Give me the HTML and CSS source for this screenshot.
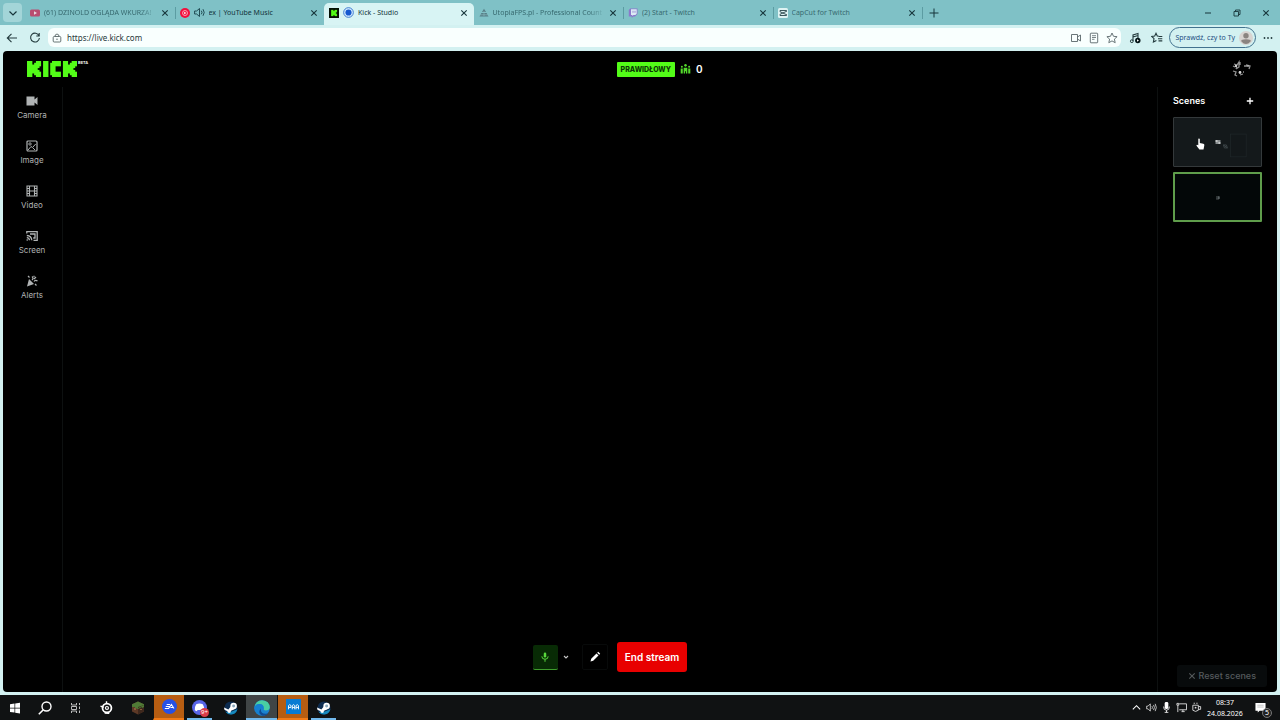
FILE: index.html
```html
<!DOCTYPE html>
<html lang="pl">
<head>
<meta charset="utf-8">
<meta name="viewport" content="width=device-width, initial-scale=1">
<title>Kick - Studio</title>
<link rel="stylesheet" href="styles.css">
</head>
<body>
<svg class="defs" aria-hidden="true">
  <symbol id="x" viewBox="0 0 8 8"><path d="M1.3 1.3l5.4 5.4M6.7 1.3L1.3 6.7" fill="none" stroke="currentColor" stroke-width="1.1"/></symbol>
  <symbol id="plus" viewBox="0 0 10 10"><path d="M5 .5v9M.5 5h9" fill="none" stroke="currentColor"/></symbol>
  <symbol id="steam" viewBox="0 0 16 16">
    <circle cx="8" cy="8" r="7.500" fill="#0d2c50"/><path d="M2 12.500A7.500 7.500 0 0 0 15.300 9.500L9 12z" fill="#1689bd"/>
    <path d="M0 7.500l5 2.200L8 6l4 3.500-4 1.500q0 3-3 2.500L3.500 11.500.5 10z" fill="#fff"/>
    <circle cx="11" cy="5.600" r="3.700" fill="#fff"/><circle cx="11" cy="5.600" r="1.700" fill="#8ba8bd"/>
  </symbol>
  <symbol id="kick-k" viewBox="0 0 8 9"><g fill="currentColor"><rect width="3" height="9"/><rect x="2" y="2" width="4" height="5"/><rect x="4" y="1" width="3" height="3"/><rect x="4" y="5" width="3" height="3"/><rect x="5" width="3" height="3"/><rect x="5" y="6" width="3" height="3"/></g></symbol>
</svg>

<header class="browser">
  <div class="tabstrip">
    <button class="tab-menu" aria-label="Menu kart"><svg viewBox="0 0 10 10" width="10" height="10"><path d="M1.500 3.500L5 7l3.500-3.500" fill="none" stroke="#17353b" stroke-width="1.200"/></svg></button>
    <nav class="tabs">
      <div class="tab">
        <svg class="fav" viewBox="0 0 10 10"><rect y="1.500" width="10" height="7" rx="1.500" fill="#b94d70"/><path d="M4 3.300v3.400L7 5z" fill="#e8dce3"/></svg>
        <span class="tab-title fade">(61) DZINOLD OGLĄDA WKURZA!</span>
        <button class="close" aria-label="Zamknij"><svg><use href="#x"/></svg></button>
      </div>
      <div class="tab sep strong">
        <svg class="fav" viewBox="0 0 10 10"><circle cx="5" cy="5" r="5" fill="#f20f3c"/><circle cx="5" cy="5" r="2.500" fill="none" stroke="#ffd5dc" stroke-width=".7"/><path d="M4.200 3.700v2.600L6.400 5z" fill="#fff"/></svg>
        <svg class="audio" viewBox="0 0 11 10"><path d="M.6 3.500h2L5.500 1v8L2.600 6.500h-2zM7.300 3.200q1.400 1.800 0 3.600M9 1.700q2.400 3.300 0 6.600" fill="none" stroke="#164047" stroke-width=".9"/></svg>
        <span class="tab-title">ex | YouTube Music</span>
        <button class="close" aria-label="Zamknij"><svg><use href="#x"/></svg></button>
      </div>
      <div class="tab active">
        <svg class="fav" viewBox="0 0 10 10"><rect width="10" height="10" fill="#061005"/><svg x="2" y="1.500" width="6.500" height="7" color="#53fc18"><use href="#kick-k"/></svg></svg>
        <svg class="audio" viewBox="0 0 10 10"><circle cx="5" cy="5" r="4.400" fill="#d5ecff" stroke="#2d6ecb" stroke-width=".8"/><circle cx="5" cy="5" r="2.800" fill="#1558cf"/></svg>
        <span class="tab-title">Kick - Studio</span>
        <button class="close" aria-label="Zamknij"><svg><use href="#x"/></svg></button>
      </div>
      <div class="tab">
        <svg class="fav" viewBox="0 0 10 10"><path d="M5 .8L7 4H3zM2.400 5h5.200L9.500 8.500H.5z" fill="#557f87"/><path d="M1 6.800h8M5 3v5" stroke="#8fbec3" stroke-width=".6"/></svg>
        <span class="tab-title fade">UtopiaFPS.pl - Professional Count</span>
        <button class="close" aria-label="Zamknij"><svg><use href="#x"/></svg></button>
      </div>
      <div class="tab sep">
        <svg class="fav" viewBox="0 0 10 10"><path d="M2.200.5H9.500V6L7 8.500H5.300L3.800 10V8.500H.8V2z" fill="#8b78cb"/><path d="M3 1.300h5.700v4.400L7.300 7H5.500L4.300 8V7H3z" fill="#ddecf5"/><path d="M5 2.800v2M7 2.800v2" stroke="#8b78cb" stroke-width=".8"/></svg>
        <span class="tab-title">(2) Start - Twitch</span>
        <button class="close" aria-label="Zamknij"><svg><use href="#x"/></svg></button>
      </div>
      <div class="tab sep">
        <svg class="fav" viewBox="0 0 10 10"><rect width="10" height="10" rx="1.500" fill="#def3f3"/><path d="M8.500 3.600V2.500H2v1.200l6.500 3M8.500 6.400v1.100H2V6.300l6.500-3" fill="none" stroke="#29464c" stroke-width=".9"/></svg>
        <span class="tab-title">CapCut for Twitch</span>
        <button class="close" aria-label="Zamknij"><svg><use href="#x"/></svg></button>
      </div>
    </nav>
    <button class="new-tab sep" aria-label="Nowa karta"><svg viewBox="0 0 10 10" width="10" height="10"><use href="#plus"/></svg></button>
    <div class="window-buttons">
      <button aria-label="Minimalizuj"><svg viewBox="0 0 8 8"><path d="M1 4h6" stroke="currentColor"/></svg></button>
      <button aria-label="Przywróć"><svg viewBox="0 0 8 8"><path d="M1 2.500h4.500V7H1zM2.500 2.500V1H7v4.500H5.500" fill="none" stroke="currentColor" stroke-width=".9"/></svg></button>
      <button aria-label="Zamknij okno"><svg viewBox="0 0 8 8"><use href="#x"/></svg></button>
    </div>
  </div>
  <div class="toolbar">
    <button class="tool" aria-label="Wstecz"><svg viewBox="0 0 12 12" width="12" height="12"><path d="M11 6H1.500M5.500 1.800L1.300 6l4.200 4.200" fill="none" stroke="#243b3e" stroke-width="1.100"/></svg></button>
    <button class="tool" aria-label="Odśwież"><svg viewBox="0 0 12 12" width="12" height="12"><path d="M10 3.700A4.400 4.400 0 1 0 10.400 6M10.200 1v3H7.300" fill="none" stroke="#243b3e" stroke-width="1.100"/></svg></button>
    <div class="address">
      <svg viewBox="0 0 10 10" width="10" height="10"><rect x="1.200" y="3.500" width="7.600" height="5.500" rx="1" fill="none" stroke="#586668" stroke-width=".9"/><path d="M3.200 3.500V2q1.800-2 3.600 0v1.500" fill="none" stroke="#586668" stroke-width=".9"/><circle cx="5" cy="6.200" r=".7" fill="#586668"/></svg>
      <input type="text" value="https://live.kick.com" aria-label="Adres">
      <button aria-label="Kamera"><svg viewBox="0 0 12 12"><path d="M1.500 2.500h6v7h-6zM7.500 5l3-2v6l-3-2" fill="none" stroke="#59666a" stroke-width=".9"/></svg></button>
      <button aria-label="Czytnik"><svg viewBox="0 0 12 12"><rect x="2.300" y="1.200" width="7.400" height="9.600" rx=".7" fill="none" stroke="#59666a" stroke-width=".9"/><path d="M4 3.700h4M4 5.500h4M4 7.300h2.500" stroke="#59666a" stroke-width=".8"/></svg></button>
      <button aria-label="Ulubione"><svg viewBox="0 0 12 12"><path d="M6 1l1.500 3.300 3.600.4-2.700 2.400.8 3.600L6 8.900l-3.200 1.800.8-3.600L.9 4.700l3.600-.4z" fill="none" stroke="#59666a" stroke-width=".9"/></svg></button>
    </div>
    <button class="extension" aria-label="Muzyka"><svg viewBox="0 0 12 12" width="12" height="12"><path d="M4 9V3l5-1.500v5M4 5l5-1.500" fill="none" stroke="#243b3e" stroke-width="1.100"/><circle cx="2.800" cy="9.200" r="1.400" fill="none" stroke="#243b3e"/><circle cx="8.800" cy="8.500" r="2.700" fill="#031316"/><path d="M8 7.300v2.400l2-1.200z" fill="#fff"/></svg></button>
    <button class="extension" aria-label="Lista ulubionych"><svg viewBox="0 0 12 12" width="12" height="12"><path d="M8 4.300l-1.700-.2L5 1.300 3.700 4.100.8 4.500 3 6.700l-.6 3.200 3-1.500M8 4.500h3.300M7 6.700h4.300M7.500 8.900h3.800" fill="none" stroke="#243b3e" stroke-width="1.100"/></svg></button>
    <button class="profile">Sprawdź, czy to Ty <svg viewBox="0 0 14 14" width="14" height="14"><circle cx="7" cy="7" r="7" fill="#d8d4d1"/><circle cx="7" cy="4.700" r="2.700" fill="#8a8480"/><path d="M2.400 9q4.600-1.500 9.200 0v1.500Q7 15.500 2.400 10.500z" fill="#8a8480"/></svg></button>
    <button class="more" aria-label="Więcej"><svg viewBox="0 0 10 4" width="10" height="4"><g fill="#243b3e"><circle cx="1.500" cy="2" r=".9"/><circle cx="5" cy="2" r=".9"/><circle cx="8.500" cy="2" r=".9"/></g></svg></button>
  </div>
</header>

<div class="page">
<div class="studio">
  <header class="top">
    <a class="brand" href="#" aria-label="Kick beta">
      <svg class="logo" viewBox="0 0 28 9" width="50" height="16" preserveAspectRatio="none" color="#53fc18"><use href="#kick-k" width="8" height="9"/><g fill="currentColor"><rect x="9" width="3" height="9"/><rect x="13" y="1" width="2" height="7"/><rect x="14" width="2" height="9"/><rect x="15" width="4" height="3"/><rect x="15" y="6" width="4" height="3"/></g><use href="#kick-k" x="20" width="8" height="9"/></svg>
      <span class="beta">BETA</span>
    </a>
    <div class="status">
      <span class="badge">PRAWIDŁOWY</span>
      <svg viewBox="0 0 12 11" width="11" height="10"><g fill="#53d92b"><circle cx="6" cy="1.500" r="1.400"/><circle cx="2" cy="3" r="1.100"/><circle cx="10" cy="3" r="1.100"/><path d="M4 4h4v6.500H6.500V8h-1v2.500H4zM.7 5H3v5.500H.7zM9 5h2.300v5.500H9z"/></g></svg>
      <span class="viewers">0</span>
    </div>
    <button class="avatar" aria-label="Konto"><svg viewBox="0 0 20 18" width="20" height="18"><g fill="none" stroke="#929292" stroke-width="1.300"><path d="M3 4l3 1 2-3v5L5 9M4 7L2 6M9 2v3M15 5l4 1-1 3M13 6l3 0M2 11l3 1-1 3 2 1M8 12h2M12 12h1M9 15l3-1M6 7l-1 2"/></g><g fill="#d2d2d2"><circle cx="5" cy="6" r="1.200"/><circle cx="9" cy="12.500" r="1.400"/><circle cx="17" cy="6" r=".8"/></g></svg></button>
  </header>

  <div class="workspace">
    <nav class="sources">
      <button><svg viewBox="0 0 12 12"><path d="M.5 1.500h8v3l3-2.500v8l-3-2.500v3h-8z" fill="currentColor"/></svg>Camera</button>
      <button><svg viewBox="0 0 12 12"><rect x="1" y="1" width="10" height="10" rx="1" fill="none" stroke="currentColor" stroke-width="1.200"/><circle cx="4" cy="4" r="1.200" fill="none" stroke="currentColor" stroke-width=".9"/><path d="M2 10l3-3.500 1.500 1L9.700 4M7 8l2 2" fill="none" stroke="currentColor"/></svg>Image</button>
      <button><svg viewBox="0 0 12 12"><path d="M1 1h10v10H1zM3.500 1v10M8.500 1v10M3.500 6h5M1 3.500h2.500M1 6h2.500M1 8.500h2.500M8.500 3.500H11M8.500 6H11M8.500 8.500H11" fill="none" stroke="currentColor" stroke-width="1.100"/></svg>Video</button>
      <button><svg viewBox="0 0 12 12"><path d="M.8 3.500V1.700h10.400v8.600H7.500M4 4h5v4H7.200M.8 5.500q4.700.2 5 4.800M.8 7.700q2.500.2 2.700 2.600" fill="none" stroke="currentColor" stroke-width="1.300"/><circle cx="1.200" cy="10" r=".8" fill="currentColor"/></svg>Screen</button>
      <button><svg viewBox="0 0 12 12"><path d="M3 4l5 5-7 2.500z" fill="currentColor"/><path d="M6 5q2-1.500 0-3.500M8 6.500q1.500-2 3.500-.5M8 4l2-2M2 1l1.500 1.500M9 9l1.500 1.500M8 .7v1.200" fill="none" stroke="currentColor" stroke-width="1.200"/></svg>Alerts</button>
    </nav>
    <main class="canvas">
      <div class="controls">
        <button class="mic" aria-label="Mikrofon"><svg viewBox="0 0 10 12" width="10" height="10"><rect x="3.500" y=".5" width="3" height="6" rx="1.500" fill="currentColor"/><path d="M1.200 5.200a3.800 3.500 0 0 0 7.600 0M5 8.700v3" fill="none" stroke="currentColor" stroke-width="1.200"/></svg></button>
        <button class="mic-menu" aria-label="Wybierz mikrofon"><svg viewBox="0 0 6 6" width="6" height="6"><path d="M1 2l2 2 2-2" fill="none" stroke="currentColor" stroke-width="1.100"/></svg></button>
        <button class="edit" aria-label="Edytuj"><svg viewBox="0 0 12 12" width="12" height="12"><path d="M1.500 10.500l.7-2.800L7.500 2.500l2 2-5.300 5.300zM8.200 1.800l1-1 2 2-1 1z" fill="currentColor"/></svg></button>
        <button class="end">End stream</button>
      </div>
    </main>
    <aside class="scenes">
      <div class="scenes-head"><h2>Scenes</h2><button aria-label="Dodaj scenę"><svg viewBox="0 0 8 8" width="8" height="8"><path d="M4 .8v6.400M.8 4h6.400" stroke="currentColor" stroke-width="1.300"/></svg></button></div>
      <button class="scene" aria-label="Scena 1">
        <svg viewBox="0 0 88 48"><rect x="57" y="16" width="16" height="23" fill="#13181a" stroke="#20272a" stroke-width=".7"/><rect x="42" y="22" width="5" height="4" fill="#8a8f91"/><path d="M42 23h2M45 25h2" stroke="#fff"/><path d="M50 27h3l1 3h-3zM50 27l4 3" fill="none" stroke="#3c4447"/></svg>
        <svg class="pointer" viewBox="0 0 9 12" width="9" height="12"><path d="M2.300.8q1-.8 1.500.2v4l3.500.8q1.300.4 1 1.600l-.8 4H3.400L.5 7.700q-.2-1.400 1.800-.5z" fill="#fff"/></svg>
      </button>
      <button class="scene current" aria-label="Scena 2"><svg viewBox="0 0 88 48"><path d="M42.500 24h3v2h-3M45.500 23v3" fill="none" stroke="#6b7275" stroke-width=".9"/></svg></button>
      <button class="reset"><svg viewBox="0 0 8 8" width="8" height="8"><use href="#x"/></svg>Reset scenes</button>
    </aside>
  </div>
</div>
</div>

<footer class="taskbar">
  <nav class="apps">
    <button aria-label="Start"><svg viewBox="0 0 12 12" width="12" height="12"><path d="M1 2.200l4.500-.7v4.200H1zM6.200 1.400L11 .7v5H6.200zM1 6.400h4.500v4.200L1 9.900zM6.200 6.400H11v5l-4.800-.7z" fill="#fff"/></svg></button>
    <button aria-label="Szukaj"><svg viewBox="0 0 14 14" width="14" height="14"><circle cx="8.500" cy="5.500" r="4.500" fill="none" stroke="#fff" stroke-width="1.400"/><path d="M5.300 8.700L.8 13.200" stroke="#fff" stroke-width="1.600"/></svg></button>
    <button aria-label="Widok zadań"><svg viewBox="0 0 12 12" width="12" height="12"><path d="M1.500 1v2h5V1M1.500 4.500h5v3h-5zM1.500 11V9h5v2M9.500 1v2M9.500 4.500v2.500M9.500 8.500V11" fill="none" stroke="#bbb" stroke-width="1"/></svg></button>
    <button aria-label="SteelSeries"><svg viewBox="0 0 14 14" width="13" height="13"><circle cx="7.500" cy="7.500" r="4.800" fill="none" stroke="#fff" stroke-width="1.900"/><circle cx="7.500" cy="7.500" r="1.600" fill="none" stroke="#fff" stroke-width="1.300"/><path d="M.5 5.500l3.500 1.200M7 3V.3M5 13l5 .3" stroke="#fff" stroke-width="1.500"/></svg></button>
    <button aria-label="Minecraft"><svg viewBox="0 0 14 14" width="14" height="14"><path d="M7 .5l6 2.700v7.300L7 13.500 1 10.500V3.200z" fill="#5c3926"/><path d="M7 .5l6 2.700v1.500L7 7.500 1 4.700V3.200z" fill="#4f7b36"/><path d="M7 6v7.500l6-3V4z" fill="#3e281d"/><path d="M3 7h2v2H3zM9 8h2v1H9z" fill="#8a5b3d"/><path d="M1 4l6 3 6-3v2l-2 1v-1L7 8 4 7v-1L1 6z" fill="#4e7a34"/></svg></button>
    <button class="alert" aria-label="EA"><svg viewBox="0 0 16 16" width="15" height="15"><circle cx="8" cy="8" r="8" fill="#2651e6"/><path d="M5 5.800h3.500M4 8h4M3 10.200h4L10 5.800l2.800 4.400M9 9h2.500" fill="none" stroke="#fff" stroke-width="1.100"/></svg></button>
    <button class="running" aria-label="Discord"><span class="discord"><svg viewBox="0 0 16 16" width="15" height="15"><circle cx="8" cy="8" r="8" fill="#5865e8"/><path d="M4.500 4.500q3.500-1.300 7 0 2 3 1.500 6.500L11 12l-1-1.300H6L5 12l-2-1q-.5-3.500 1.500-6.500z" fill="#fff"/></svg><span>9+</span></span></button>
    <button aria-label="Steam"><svg width="14" height="14"><use href="#steam"/></svg></button>
    <button class="running focused" aria-label="Edge"><svg viewBox="0 0 16 16" width="16" height="16"><circle cx="8" cy="8" r="7.800" fill="#1b83d0"/><path d="M.5 7Q2 .2 8 .2 15.600.8 15.800 7.500q-.5 3-4 3-2.800-.2-1.800-2.200Q9.500 4 5.500 4 2 4.200.5 7z" fill="#49cfa3"/><path d="M.3 8q1-4 5-3.900 4 .2 4.200 3.300-3 0-2.700 2.900.4 3.200 4.500 4.700Q3.500 17 .3 8z" fill="#1580d2"/><path d="M7 8.500q-1 5 4.500 5.300 2 0 3.300-1-3 4.300-7.500 2.500-4-3-.3-6.800z" fill="#104b94"/></svg></button>
    <button class="alert" aria-label="GPM"><svg viewBox="0 0 16 16" width="15" height="15"><rect width="16" height="16" fill="#087bd3"/><path d="M2.700 11V7q1.300-2 2.600 0v2H3M6.700 11V7q1.300-2 2.600 0v4M6.700 9h2.600M10.700 11V7q1.300-2 2.600 0v4M10.700 9h2.600" fill="none" stroke="#fff" stroke-width="1"/></svg></button>
    <button class="running" aria-label="Steam"><svg width="14" height="14"><use href="#steam"/></svg></button>
  </nav>
  <div class="tray">
    <button aria-label="Ukryte ikony"><svg viewBox="0 0 12 12"><path d="M2 8l4-4 4 4" fill="none" stroke="#fff" stroke-width="1.100"/></svg></button>
    <button aria-label="Głośność"><svg viewBox="0 0 12 12"><path d="M.7 4.500h1.600L4.700 2v8L2.300 7.500H.7zM6.500 4.500q1 1.500 0 3M8.200 3.200q2 2.800 0 5.600M10 2q2.500 4 0 8" fill="none" stroke="#ddd" stroke-width=".9"/></svg></button>
    <button aria-label="Mikrofon"><svg viewBox="0 0 12 12"><rect x="4" y="0" width="4" height="7.500" rx="1.500" fill="#fff"/><path d="M2.800 5q0 4 3.200 4t3.200-4M6 9v2.300M4 11.300h4" fill="none" stroke="#fff" stroke-width=".9"/></svg></button>
    <button aria-label="Sieć"><svg viewBox="0 0 12 12"><path d="M3.500 2h8v6.500h-8M6 10.500h3.500M7.500 8.500v2M1 1.500h2v2H1zM2 3.500v7.500" fill="none" stroke="#ddd" stroke-width="1"/></svg></button>
    <button aria-label="Zasilanie"><svg viewBox="0 0 12 12"><path d="M2 3.500h6v5.500q-3 2.500-6 0zM8 5h2.500v3H8M3.500.7v1.500M6.500.7v1.500" fill="none" stroke="#ddd" stroke-width="1"/><circle cx="5" cy="6.200" r="1" fill="#ddd"/></svg></button>
    <div class="clock"><time>08:37</time><time>24.08.2026</time></div>
    <button class="notices" aria-label="Powiadomienia"><svg viewBox="0 0 12 12" width="12" height="12"><path d="M.5 1h11v8.500H5L3 11.500v-2H.5z" fill="#fff"/><path d="M2.500 3.500h7M2.500 5.500h7" stroke="#999" stroke-width=".6"/></svg><span>5</span></button>
  </div>
</footer>
</body>
</html>
```

FILE: styles.css
```css
* { box-sizing: border-box; }

body {
  margin: 0;
  min-height: 100vh;
  display: flex;
  flex-direction: column;
  background: #d3f1f1;
  color: #fff;
  font: 10px/12px Inter, sans-serif;
}

button {
  display: flex;
  align-items: center;
  justify-content: center;
  flex-shrink: 0;
  margin: 0;
  padding: 0;
  border: 0;
  background: none;
  color: inherit;
  font: inherit;
}

svg { display: block; flex-shrink: 0; }
.defs { position: absolute; width: 0; height: 0; }

/* Browser window */
.browser { font: 7px/12px "Noto Sans", "Open Sans", sans-serif; color: #17353b; }

.tabstrip {
  display: flex;
  align-items: center;
  height: 25px;
  padding-left: 3px;
  background: #7fc1c6;
}
.tab-menu { width: 19px; height: 19px; border-radius: 4px; background: #a3d5d8; }
.tabs { display: flex; flex: 0 1 897px; min-width: 0; margin-left: 3px; align-self: stretch; }
.tab {
  display: flex;
  flex: 1 1 0;
  align-items: center;
  min-width: 0;
  gap: 4px;
  padding: 0 6px 0 5px;
  color: #37696f;
}
.tab .fav { width: 10px; height: 10px; }
.tab .audio { width: 11px; height: 11px; }
.tab-title { flex: 1; min-width: 0; overflow: hidden; white-space: nowrap; }
.fade { mask-image: linear-gradient(to right, #000 85%, transparent); }
.close { width: 8px; height: 8px; color: #17353b; }
.close svg { width: 8px; height: 8px; }
.sep { background: linear-gradient(#5c9ca2, #5c9ca2) left center / 1px 12px no-repeat; }
.strong, .active { color: #12343a; }
.active { margin-top: 3px; padding-bottom: 3px; border-radius: 5px 5px 0 0; background: #d8f4f4; }
.new-tab { width: 24px; height: 20px; }
.window-buttons { display: flex; margin-left: auto; }
.window-buttons button { width: 29px; height: 24px; }
.window-buttons svg { width: 8px; height: 8px; }

.toolbar { display: flex; align-items: center; height: 26px; padding: 0 1px 1px 0; background: #d3f1f1; }
.tool { width: 23px; height: 20px; }
.address {
  display: flex;
  flex: 1;
  align-items: center;
  min-width: 0;
  height: 19px;
  margin: 0 3px 0 2px;
  padding: 0 0 0 4px;
  border-radius: 6px;
  background: #f9fffe;
}
.address input {
  flex: 1;
  min-width: 0;
  margin-left: 5px;
  padding: 0;
  border: 0;
  outline: 0;
  background: none;
  color: #273739;
  font: 8px/12px "Noto Sans", "Open Sans", sans-serif;
}
.address button { width: 18px; height: 18px; }
.address button svg { width: 12px; height: 12px; }
.extension { width: 22px; height: 20px; }
.profile {
  gap: 4px;
  height: 21px;
  margin-left: 1px;
  padding: 0 2px 0 5px;
  border: 1px solid #42728f;
  border-radius: 11px;
  color: #244f83;
}
.more { width: 22px; height: 20px; margin-left: 1px; }

/* Studio */
.page { display: flex; flex: 1; padding: 0 3px 3px; }
.studio {
  display: flex;
  flex: 1;
  flex-direction: column;
  min-width: 0;
  border-radius: 4px;
  background: #000;
}
.top { display: flex; align-items: center; justify-content: space-between; height: 36px; padding: 0 26px 0 24px; }
.brand { display: flex; gap: 1px; color: #fff; text-decoration: none; }
.beta { font-size: 4px; line-height: 4px; font-weight: 600; }
.status { display: flex; align-items: center; gap: 5px; }
.badge { padding: 2px 4px; border-radius: 1px; background: #53fc18; color: #0c3806; font: 800 7px/11px Inter, sans-serif; }
.viewers { font-weight: 600; font-size: 10px; }
.avatar { width: 20px; height: 20px; }

.workspace { display: flex; flex: 1; }
.sources {
  display: flex;
  flex-direction: column;
  gap: 20px;
  width: 60px;
  padding: 8px 1px 0 0;
  border-right: 1px solid #0d1010;
}
.sources button { flex-direction: column; gap: 3px; color: #b0b3b4; font-size: 8px; line-height: 10px; }
.sources svg { width: 12px; height: 12px; }

.canvas { display: flex; flex: 1; flex-direction: column; justify-content: flex-end; align-items: center; min-width: 0; padding-bottom: 20px; }
.controls { display: flex; align-items: center; }
.mic { width: 25px; height: 25px; border-bottom: 1px solid #3f9d2d; border-radius: 2px; background: #082b05; color: #58d93c; }
.mic-menu { width: 16px; height: 25px; color: #c6c6c6; }
.edit { width: 26px; height: 26px; margin: 0 9px 0 8px; border: 1px solid #080a0a; border-radius: 2px; }
.end { padding: 9px 8px; border-radius: 3px; background: #e80000; font-weight: 600; }

.scenes { display: flex; flex-direction: column; gap: 5px; width: 120px; padding: 7px 15px 5px; border-left: 1px solid #0d1010; }
.scenes-head { display: flex; align-items: center; justify-content: space-between; margin-bottom: 5px; }
.scenes h2 { margin: 0; font-size: 9px; line-height: 13px; font-weight: 600; }
.scenes-head button { width: 24px; height: 13px; }
.scene { position: relative; height: 50px; border: 1px solid #34393b; border-radius: 1px; background: #14191b; }
.scene svg { width: 100%; height: 100%; }
.scene .pointer { position: absolute; left: 22px; top: 20px; width: 9px; height: 12px; }
.current { border: 2px solid #5f9d4b; background: #030708; }
.reset { gap: 3px; align-self: flex-end; height: 22px; margin: auto -5px 0 0; padding: 0 11px; border-radius: 3px; background: #080b0c; color: #555a5c; font-size: 9px; font-weight: 500; }

/* Taskbar */
.taskbar { display: flex; justify-content: space-between; height: 25px; overflow: hidden; background: #101213; font: 7px/11px "Noto Sans", "Open Sans", sans-serif; }
.apps { display: flex; }
.apps button { width: 31px; height: 25px; }
.apps button:first-child { width: 29px; }
.apps .running { background: linear-gradient(#72b9ec, #72b9ec) center bottom / 25px 2px no-repeat; }
.apps .focused { background-color: #404546; background-size: 31px 2px; }
.apps .alert { border-left: 1px solid #101213; border-bottom: 2px solid #f17a16; background: #b65d12; }
.discord { position: relative; }
.discord span { position: absolute; right: -2px; bottom: -2px; width: 9px; height: 9px; border-radius: 5px; background: #d83c48; color: #fff; font-size: 6px; line-height: 9px; text-align: center; }
.tray { display: flex; align-items: center; padding-right: 8px; }
.tray > button { width: 15px; height: 24px; }
.tray > button svg { width: 11px; height: 11px; }
.clock { display: flex; flex-direction: column; width: 42px; align-items: center; }
.tray .notices { position: relative; width: 24px; margin-left: 2px; }
.notices span { position: absolute; right: 0; bottom: 2px; width: 10px; height: 10px; border: 1px solid #777; border-radius: 5px; background: #222; font-size: 7px; line-height: 8px; text-align: center; }
```
